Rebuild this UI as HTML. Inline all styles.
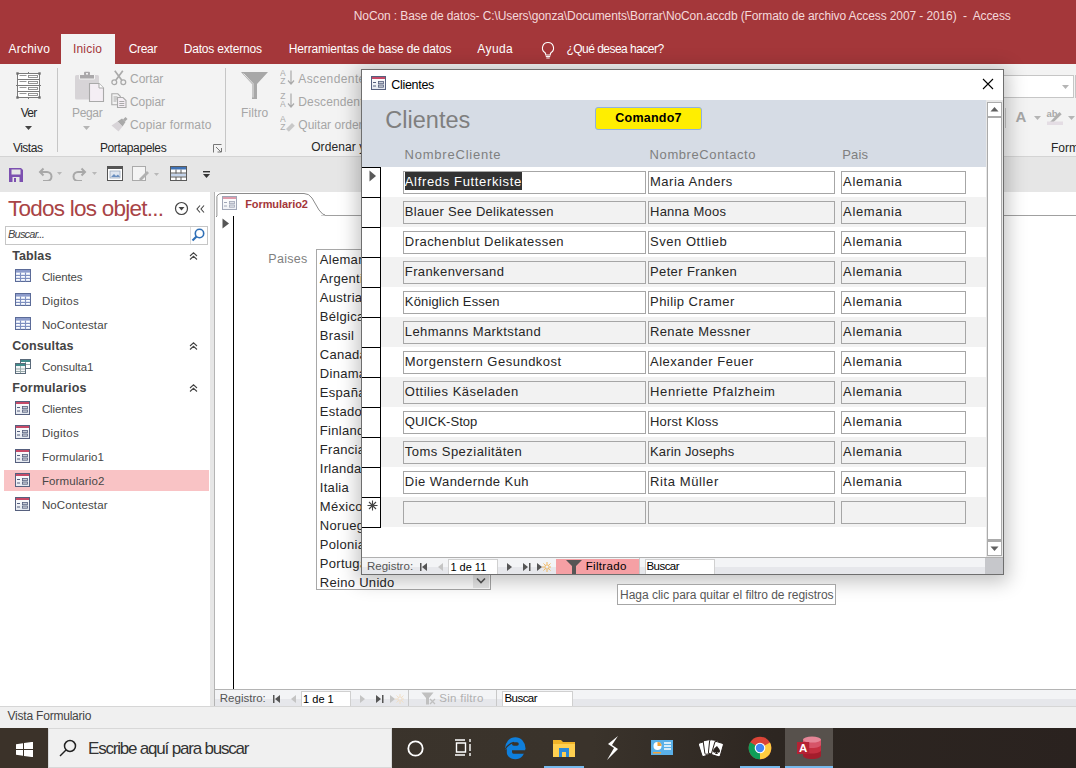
<!DOCTYPE html>
<html><head><meta charset="utf-8"><style>
html,body{margin:0;padding:0;width:1076px;height:768px;overflow:hidden;background:#fff;position:relative;font-family:"Liberation Sans", sans-serif;}
body>div, body>span, body>svg{position:absolute;box-sizing:border-box;}
.t{white-space:pre;}
</style></head><body>
<div style="left:0px;top:0px;width:1076px;height:64px;background:#a4373a;"></div>
<span id="t2c41942c" class="t" style="left:353.80px;top:9.84px;font-size:12px;line-height:12px;color:#f4d9da;font-weight:400;letter-spacing:-0.109px;">NoCon : Base de datos- C:\Users\gonza\Documents\Borrar\NoCon.accdb (Formato de archivo Access 2007 - 2016)  -  Access</span>
<div style="left:61px;top:34px;width:54px;height:30px;background:#f3f3f3;"></div>
<span id="t8937b4cb" class="t" style="left:8.60px;top:42.54px;font-size:12px;line-height:12px;color:#fff;font-weight:400;letter-spacing:0.214px;">Archivo</span>
<span id="td227f0e0" class="t" style="left:72.90px;top:42.54px;font-size:12px;line-height:12px;color:#a4373a;font-weight:400;letter-spacing:0.215px;">Inicio</span>
<span id="t27a76a8a" class="t" style="left:128.80px;top:42.54px;font-size:12px;line-height:12px;color:#fff;font-weight:400;letter-spacing:-0.355px;">Crear</span>
<span id="t04ee1a8f" class="t" style="left:183.70px;top:42.54px;font-size:12px;line-height:12px;color:#fff;font-weight:400;letter-spacing:-0.186px;">Datos externos</span>
<span id="t139b2d12" class="t" style="left:288.80px;top:42.54px;font-size:12px;line-height:12px;color:#fff;font-weight:400;letter-spacing:-0.169px;">Herramientas de base de datos</span>
<span id="t25d298b5" class="t" style="left:477.30px;top:42.54px;font-size:12px;line-height:12px;color:#fff;font-weight:400;letter-spacing:0.422px;">Ayuda</span>
<span id="t99ffe0c6" class="t" style="left:566.50px;top:42.54px;font-size:12px;line-height:12px;color:#fff;font-weight:400;letter-spacing:-0.530px;">¿Qué desea hacer?</span>
<svg style="left:538px;top:40px" width="20" height="20" viewBox="0 0 20 20"><path d="M10 2.5a5.5 5.5 0 0 0-3.2 10c.6.5.9 1.1.9 1.8v.7h4.6v-.7c0-.7.3-1.3.9-1.8A5.5 5.5 0 0 0 10 2.5z" fill="none" stroke="#fff" stroke-width="1.1"/><path d="M7.8 16.5h4.4M8.3 18h3.4" stroke="#fff" stroke-width="1.1"/></svg>
<div style="left:0px;top:64px;width:1076px;height:92px;background:#f3f3f3;"></div>
<div style="left:0px;top:156px;width:1076px;height:1px;background:#d4d4d4;"></div>
<div style="left:0px;top:157px;width:1076px;height:35px;background:#e6e6e6;"></div>
<div style="left:57px;top:68px;width:1px;height:84px;background:#c6c6c6;"></div>
<div style="left:225px;top:68px;width:1px;height:84px;background:#c6c6c6;"></div>
<svg style="left:15px;top:71px" width="28" height="29" viewBox="0 0 28 29">
<rect x="2.5" y="2.5" width="22" height="24" fill="#fff" stroke="#7a7a7a" stroke-width="1"/>
<path d="M2.5 8.5h22M1 14.5h25M2.5 20.5h22M13.5 1v2M13.5 26v2" stroke="#7a7a7a" stroke-width="1"/>
<g stroke="#8a8a8a" stroke-width="0.9"><path d="M4.5 4.5h7M4.5 10.5h7M4.5 16.5h7M4.5 22.5h7"/></g>
<g fill="none" stroke="#8a8a8a" stroke-width="0.9"><rect x="13.5" y="4.5" width="9" height="2"/><rect x="13.5" y="10.5" width="9" height="2"/><rect x="13.5" y="16.5" width="9" height="2"/><rect x="13.5" y="22.5" width="9" height="2"/></g>
<g fill="#6d6d6d"><rect x="1.3" y="1.3" width="2.4" height="2.4"/><rect x="23.3" y="1.3" width="2.4" height="2.4"/><rect x="1.3" y="25.3" width="2.4" height="2.4"/><rect x="23.3" y="25.3" width="2.4" height="2.4"/></g>
</svg>
<span id="tbc9aa845" class="t" style="left:20.70px;top:106.74px;font-size:12px;line-height:12px;color:#262626;font-weight:400;letter-spacing:-0.714px;">Ver</span>
<svg style="left:25px;top:126px" width="7" height="4"><path d="M0 0h7L3.5 4z" fill="#444"/></svg>
<span id="td7a6607a" class="t" style="left:12.90px;top:141.74px;font-size:12px;line-height:12px;color:#262626;font-weight:400;letter-spacing:-0.495px;">Vistas</span>
<svg style="left:74px;top:71px" width="31" height="32" viewBox="0 0 31 32">
<rect x="1" y="4" width="24" height="24.5" rx="1.5" fill="#d7d4d7"/>
<path d="M5.5 3.5h15v4.5h-15z" fill="#aaa8aa" stroke="#f3f3f3" stroke-width="1"/><rect x="10" y="0.8" width="6" height="3.5" rx="1" fill="#aaa8aa"/><rect x="12" y="2" width="2" height="1.6" fill="#f3f3f3"/>
<path d="M15.5 12.5h9.5l4.5 4.5v13.5h-14z" fill="#f4eef4" stroke="#a9a9a9" stroke-width="1.1"/><path d="M25 12.5v4.5h4.5" fill="#fff" stroke="#a9a9a9" stroke-width="1"/>
</svg>
<span id="t9d9e3550" class="t" style="left:72.00px;top:106.74px;font-size:12px;line-height:12px;color:#a6a6a6;font-weight:400;letter-spacing:-0.331px;">Pegar</span>
<svg style="left:83px;top:126px" width="7" height="4"><path d="M0 0h7L3.5 4z" fill="#b5b5b5"/></svg>
<svg style="left:111px;top:70px" width="16" height="16" viewBox="0 0 16 16" fill="none" stroke="#aaa" stroke-width="1.3">
<circle cx="3.3" cy="12.2" r="2.4"/><circle cx="12.3" cy="12.2" r="2.4"/><path d="M4.8 10.2L11.8 0.8M10.8 10.2L3.8 0.8" stroke-width="1.7"/></svg>
<span id="t2133024d" class="t" style="left:130.00px;top:72.64px;font-size:12px;line-height:12px;color:#a6a6a6;font-weight:400;letter-spacing:-0.008px;">Cortar</span>
<svg style="left:111px;top:93px" width="16" height="15" viewBox="0 0 16 15" fill="none" stroke="#aaa" stroke-width="1.1">
<path d="M0.8 0.8h6l2.5 2.5v8.5H0.8z" fill="#f3f3f3"/><path d="M2.5 4h4M2.5 6h4M2.5 8h3"/><path d="M6.5 4.5h5.5l3 3v7H6.5z" fill="#f4eef4"/><path d="M8.3 8.5h5M8.3 10.5h5M8.3 12.5h5"/></svg>
<span id="te0536d55" class="t" style="left:130.00px;top:95.64px;font-size:12px;line-height:12px;color:#a6a6a6;font-weight:400;letter-spacing:-0.073px;">Copiar</span>
<svg style="left:111px;top:116px" width="17" height="16" viewBox="0 0 17 16">
<path d="M12 3.5L14.5 1l2 2L14 5.5z" fill="#a9a9a9"/><path d="M6.5 5.5L11 2.5l3.5 3.5-3 4.5z" fill="#a9a9a9"/><path d="M0.5 9.5l6-4 5 5-4 5z" fill="#d8d4d8"/></svg>
<span id="t9d312f95" class="t" style="left:130.00px;top:118.54px;font-size:12px;line-height:12px;color:#a6a6a6;font-weight:400;letter-spacing:0.149px;">Copiar formato</span>
<span id="tdb10d478" class="t" style="left:99.90px;top:141.74px;font-size:12px;line-height:12px;color:#262626;font-weight:400;letter-spacing:-0.357px;">Portapapeles</span>
<svg style="left:213px;top:144px" width="9" height="9" viewBox="0 0 9 9" fill="none" stroke="#777" stroke-width="1"><path d="M0.5 8.5V0.5h8"/><path d="M3 3l5 5M4.5 8h4v-4"/></svg>
<svg style="left:240px;top:71px" width="29" height="29" viewBox="0 0 29 29">
<path d="M1 1h27L17 13v15h-5V13z" fill="#a8a8a8"/><path d="M3.5 2.5L13 12.5v14" fill="none" stroke="#e6e6e6" stroke-width="1"/></svg>
<span id="tf4739ed4" class="t" style="left:241.10px;top:106.54px;font-size:12px;line-height:12px;color:#a6a6a6;font-weight:400;letter-spacing:0.086px;">Filtro</span>
<svg style="left:280px;top:69px" width="15" height="64" viewBox="0 0 15 64" fill="none" stroke="#aaa" stroke-width="1.2">
<g fill="#aaa" stroke="none" font-family="Liberation Sans" font-size="8.5">
<text x="0" y="7">A</text><text x="0.3" y="15">Z</text>
<text x="0.3" y="30">Z</text><text x="0" y="38">A</text>
<text x="0" y="53">A</text><text x="0.3" y="61">Z</text></g>
<path d="M11 1.5v13M8 11.5l3 3.5 3-3.5"/>
<path d="M11 24.5v13M8 34.5l3 3.5 3-3.5"/>
<path d="M6 60l6-6 2.8 2.8-6 6z" fill="#c8c8c8" stroke="none"/>
</svg>
<span id="t75ef0aee" class="t" style="left:298.30px;top:72.64px;font-size:12px;line-height:12px;color:#a6a6a6;font-weight:400;letter-spacing:0.402px;">Ascendente</span>
<span id="t7c66c3f4" class="t" style="left:298.30px;top:95.64px;font-size:12px;line-height:12px;color:#a6a6a6;font-weight:400;letter-spacing:0.128px;">Descendente</span>
<span id="t8762347c" class="t" style="left:298.30px;top:118.64px;font-size:12px;line-height:12px;color:#a6a6a6;font-weight:400;letter-spacing:0.027px;">Quitar orden</span>
<span id="tcd19f41e" class="t" style="left:311.20px;top:141.34px;font-size:12px;line-height:12px;color:#262626;font-weight:400;letter-spacing:0.103px;">Ordenar y filtrar</span>
<div style="left:960px;top:75px;width:114px;height:23px;background:#fff;border:1px solid #c6c6c6;"></div>
<svg style="left:1062px;top:85px" width="7" height="4"><path d="M0 0h7L3.5 4z" fill="#b5b5b5"/></svg>
<div style="left:1005px;top:108px;width:1px;height:20px;background:#c6c6c6;"></div>
<span id="t583ee700" class="t" style="left:1015.50px;top:109.30px;font-size:15px;line-height:15px;color:#a6a6a6;font-weight:700;letter-spacing:0.000px;">A</span>
<svg style="left:1034px;top:116px" width="7" height="4"><path d="M0 0h7L3.5 4z" fill="#b5b5b5"/></svg>
<div style="left:1075px;top:75px;width:1px;height:23px;background:#c6c6c6;"></div>
<svg style="left:1046px;top:108px" width="18" height="18" viewBox="0 0 18 18"><text x="0.5" y="9" font-size="9.5" font-weight="bold" fill="#a9a9a9" font-family="Liberation Sans">ab</text><path d="M4.5 13.5L13.5 4l2.2 2.2-9.3 9z" fill="#b0b0b0"/><path d="M3.5 15l1-1.5 1.8 1.8z" fill="#999"/><rect x="1" y="13.5" width="16" height="3.5" fill="#e4dde4"/></svg>
<svg style="left:1068px;top:116px" width="7" height="4"><path d="M0 0h7L3.5 4z" fill="#b5b5b5"/></svg>
<span id="td6e61245" class="t" style="left:1050.90px;top:141.84px;font-size:12px;line-height:12px;color:#262626;font-weight:400;letter-spacing:0.000px;">Formato de texto</span>
<svg style="left:8px;top:167px" width="16" height="16" viewBox="0 0 16 16"><path d="M1 1h12l2 2v12H1z" fill="#7c50b0"/><rect x="3.5" y="2.5" width="9" height="5" fill="#e6e6e6"/><rect x="4.5" y="10" width="7" height="5" fill="#e6e6e6"/><rect x="6" y="11" width="2" height="4" fill="#7c50b0"/></svg>
<svg style="left:37px;top:166px" width="28" height="15" viewBox="0 0 28 15" fill="none" stroke="#a8a8a8" stroke-width="2"><path d="M3 6h7a4.5 4.5 0 0 1 0 9H6"/><path d="M6.5 2.5L3 6l3.5 3.5"/><path d="M20 6h5l-2.5 3z" fill="#b8b8b8" stroke="none"/></svg>
<svg style="left:72px;top:166px" width="28" height="15" viewBox="0 0 28 15" fill="none" stroke="#a8a8a8" stroke-width="2"><path d="M13 6H6a4.5 4.5 0 0 0 0 9h4"/><path d="M9.5 2.5L13 6l-3.5 3.5"/><path d="M20 6h5l-2.5 3z" fill="#b8b8b8" stroke="none"/></svg>
<svg style="left:107px;top:166px" width="16" height="15" viewBox="0 0 16 15"><rect x="0.5" y="0.5" width="15" height="14" fill="#fff" stroke="#555"/><rect x="0.5" y="0.5" width="15" height="2.5" fill="#555"/><rect x="3" y="5" width="10" height="7" fill="#dfe6f0" stroke="#9aa8bb" stroke-width="0.8"/><path d="M4 11l3-3 2 2 2-1.5 2 2.5z" fill="#6a8fc0"/></svg>
<svg style="left:132px;top:166px" width="30" height="16" viewBox="0 0 30 16"><rect x="0.5" y="0.5" width="13" height="14" fill="#f4f4f4" stroke="#aaa"/><path d="M7 13L15 5l2 2-8 8z" fill="#b0b0b0"/><path d="M22 7h5l-2.5 3z" fill="#b8b8b8"/></svg>
<svg style="left:170px;top:166px" width="17" height="15" viewBox="0 0 17 15"><rect x="0.5" y="0.5" width="16" height="14" fill="#fff" stroke="#5a5a5a"/><rect x="1" y="1" width="15" height="2.5" fill="#3f72b5"/><rect x="1" y="7.5" width="15" height="3" fill="#c3d3ea"/><path d="M1 7h15M1 11h15" stroke="#5a5a5a" stroke-width="1"/><path d="M6 3.5v4M11 3.5v4M6 11v3.5M11 11v3.5" stroke="#5a5a5a" stroke-width="1"/></svg>
<svg style="left:203px;top:171px" width="7" height="7" viewBox="0 0 7 7"><rect x="0" y="0" width="7" height="1.4" fill="#333"/><path d="M0 3h7L3.5 7z" fill="#333"/></svg>
<div style="left:0px;top:192px;width:210px;height:514px;background:#fff;"></div>
<span id="t23f088af" class="t" style="left:8.00px;top:197.95px;font-size:22.5px;line-height:22.5px;color:#a94446;font-weight:400;letter-spacing:-0.756px;">Todos los objet...</span>
<svg style="left:174px;top:201px" width="15" height="15" viewBox="0 0 15 15"><circle cx="7.5" cy="7.5" r="6" fill="none" stroke="#444" stroke-width="1.2"/><path d="M4.5 6h6l-3 3.5z" fill="#444"/></svg>
<svg style="left:196px;top:205px" width="9" height="8" viewBox="0 0 9 8" fill="none" stroke="#444" stroke-width="1.1"><path d="M4 0.5L1 4l3 3.5M8 0.5L5 4l3 3.5"/></svg>
<div style="left:5px;top:226px;width:203px;height:19px;background:#fff;border:1px solid #c6c6c6;"></div>
<div style="left:190px;top:227px;width:1px;height:17px;background:#dcdcdc;"></div>
<svg style="left:191px;top:228px" width="15" height="14" viewBox="0 0 15 14"><circle cx="8.5" cy="5.5" r="4.2" fill="none" stroke="#2f6fb6" stroke-width="1.6"/><path d="M5.5 8.5L1.5 12.5" stroke="#2f6fb6" stroke-width="2.2"/></svg>
<span id="t4825565f" class="t" style="left:8.00px;top:229.29px;font-size:11px;line-height:11px;color:#444;font-weight:400;letter-spacing:-0.788px;font-style:italic;">Buscar...</span>
<span id="tdbd657d5" class="t" style="left:12.20px;top:249.72px;font-size:12.5px;line-height:12.5px;color:#444;font-weight:700;letter-spacing:0.104px;">Tablas</span>
<svg style="left:189px;top:251.60000000000002px" width="9" height="8" viewBox="0 0 9 8" fill="none" stroke="#444" stroke-width="1.1"><path d="M1 4L4.5 0.8 8 4M1 7.5L4.5 4.3 8 7.5"/></svg>
<svg style="left:15px;top:269.3px" width="16" height="13" viewBox="0 0 16 13"><rect x="0.5" y="0.5" width="15" height="12" fill="#dfe6f4" stroke="#5b6b98"/><rect x="1" y="1" width="14" height="2.5" fill="#8d9ccb"/><path d="M1 6.5h14M1 9.5h14M5.5 3.5v9M10.5 3.5v9" stroke="#7f90c0" stroke-width="1"/><path d="M1.5 4.5h3M6.5 4.5h3M11.5 4.5h3M1.5 7.5h3M6.5 7.5h3M11.5 7.5h3M1.5 10.5h3M6.5 10.5h3M11.5 10.5h3" stroke="#fff" stroke-width="1"/></svg>
<span id="td8e4149c" class="t" style="left:41.90px;top:271.97px;font-size:11.5px;line-height:11.5px;color:#474747;font-weight:400;letter-spacing:-0.123px;">Clientes</span>
<svg style="left:15px;top:293.3px" width="16" height="13" viewBox="0 0 16 13"><rect x="0.5" y="0.5" width="15" height="12" fill="#dfe6f4" stroke="#5b6b98"/><rect x="1" y="1" width="14" height="2.5" fill="#8d9ccb"/><path d="M1 6.5h14M1 9.5h14M5.5 3.5v9M10.5 3.5v9" stroke="#7f90c0" stroke-width="1"/><path d="M1.5 4.5h3M6.5 4.5h3M11.5 4.5h3M1.5 7.5h3M6.5 7.5h3M11.5 7.5h3M1.5 10.5h3M6.5 10.5h3M11.5 10.5h3" stroke="#fff" stroke-width="1"/></svg>
<span id="t5487d355" class="t" style="left:41.90px;top:295.97px;font-size:11.5px;line-height:11.5px;color:#474747;font-weight:400;letter-spacing:0.289px;">Digitos</span>
<svg style="left:15px;top:317.3px" width="16" height="13" viewBox="0 0 16 13"><rect x="0.5" y="0.5" width="15" height="12" fill="#dfe6f4" stroke="#5b6b98"/><rect x="1" y="1" width="14" height="2.5" fill="#8d9ccb"/><path d="M1 6.5h14M1 9.5h14M5.5 3.5v9M10.5 3.5v9" stroke="#7f90c0" stroke-width="1"/><path d="M1.5 4.5h3M6.5 4.5h3M11.5 4.5h3M1.5 7.5h3M6.5 7.5h3M11.5 7.5h3M1.5 10.5h3M6.5 10.5h3M11.5 10.5h3" stroke="#fff" stroke-width="1"/></svg>
<span id="ta6d47f49" class="t" style="left:41.90px;top:319.97px;font-size:11.5px;line-height:11.5px;color:#474747;font-weight:400;letter-spacing:0.104px;">NoContestar</span>
<span id="tf32ed124" class="t" style="left:12.20px;top:339.72px;font-size:12.5px;line-height:12.5px;color:#444;font-weight:700;letter-spacing:0.108px;">Consultas</span>
<svg style="left:189px;top:341.6px" width="9" height="8" viewBox="0 0 9 8" fill="none" stroke="#444" stroke-width="1.1"><path d="M1 4L4.5 0.8 8 4M1 7.5L4.5 4.3 8 7.5"/></svg>
<svg style="left:15px;top:359.3px" width="16" height="15" viewBox="0 0 16 15"><rect x="5.5" y="0.5" width="10" height="9" fill="#fff" stroke="#5a6a7a"/><rect x="6" y="1" width="9" height="2" fill="#3f8a8a"/><path d="M6 5.5h9M10.5 3v6.5" stroke="#9aa"/><rect x="0.5" y="4.5" width="10" height="10" fill="#f4f6f8" stroke="#5a6a7a"/><rect x="1" y="5" width="9" height="2" fill="#3f8a8a"/><path d="M1 10h9M1 12.5h9M5.5 7v7" stroke="#9aa"/></svg>
<span id="t42013a82" class="t" style="left:41.90px;top:361.97px;font-size:11.5px;line-height:11.5px;color:#474747;font-weight:400;letter-spacing:-0.023px;">Consulta1</span>
<span id="t48282d93" class="t" style="left:12.20px;top:381.72px;font-size:12.5px;line-height:12.5px;color:#444;font-weight:700;letter-spacing:0.205px;">Formularios</span>
<svg style="left:189px;top:383.6px" width="9" height="8" viewBox="0 0 9 8" fill="none" stroke="#444" stroke-width="1.1"><path d="M1 4L4.5 0.8 8 4M1 7.5L4.5 4.3 8 7.5"/></svg>
<svg style="left:15px;top:400.6px" width="15" height="14" viewBox="0 0 15 14"><defs><linearGradient id="fg" x1="0" y1="0" x2="0" y2="1"><stop offset="0" stop-color="#fff"/><stop offset="1" stop-color="#e4e8f0"/></linearGradient></defs><rect x="0.5" y="0.5" width="14" height="13" fill="url(#fg)" stroke="#56607e"/><rect x="1" y="1" width="13" height="2" fill="#c64a68"/><path d="M2 6.5h3M2 10h3" stroke="#56607e" stroke-width="1"/><rect x="7.5" y="5.5" width="5" height="2.2" fill="#c8ccd6" stroke="#56607e" stroke-width="0.8"/><rect x="7.5" y="9" width="5" height="2.2" fill="#c8ccd6" stroke="#56607e" stroke-width="0.8"/></svg>
<span id="t90a23737" class="t" style="left:41.90px;top:404.27px;font-size:11.5px;line-height:11.5px;color:#474747;font-weight:400;letter-spacing:-0.123px;">Clientes</span>
<svg style="left:15px;top:424.6px" width="15" height="14" viewBox="0 0 15 14"><defs><linearGradient id="fg" x1="0" y1="0" x2="0" y2="1"><stop offset="0" stop-color="#fff"/><stop offset="1" stop-color="#e4e8f0"/></linearGradient></defs><rect x="0.5" y="0.5" width="14" height="13" fill="url(#fg)" stroke="#56607e"/><rect x="1" y="1" width="13" height="2" fill="#c64a68"/><path d="M2 6.5h3M2 10h3" stroke="#56607e" stroke-width="1"/><rect x="7.5" y="5.5" width="5" height="2.2" fill="#c8ccd6" stroke="#56607e" stroke-width="0.8"/><rect x="7.5" y="9" width="5" height="2.2" fill="#c8ccd6" stroke="#56607e" stroke-width="0.8"/></svg>
<span id="t9631d096" class="t" style="left:41.90px;top:428.27px;font-size:11.5px;line-height:11.5px;color:#474747;font-weight:400;letter-spacing:0.289px;">Digitos</span>
<div style="left:4px;top:470px;width:205px;height:21px;background:#f9c3c5;"></div>
<svg style="left:15px;top:448.6px" width="15" height="14" viewBox="0 0 15 14"><defs><linearGradient id="fg" x1="0" y1="0" x2="0" y2="1"><stop offset="0" stop-color="#fff"/><stop offset="1" stop-color="#e4e8f0"/></linearGradient></defs><rect x="0.5" y="0.5" width="14" height="13" fill="url(#fg)" stroke="#56607e"/><rect x="1" y="1" width="13" height="2" fill="#c64a68"/><path d="M2 6.5h3M2 10h3" stroke="#56607e" stroke-width="1"/><rect x="7.5" y="5.5" width="5" height="2.2" fill="#c8ccd6" stroke="#56607e" stroke-width="0.8"/><rect x="7.5" y="9" width="5" height="2.2" fill="#c8ccd6" stroke="#56607e" stroke-width="0.8"/></svg>
<span id="t59b45e81" class="t" style="left:41.90px;top:452.27px;font-size:11.5px;line-height:11.5px;color:#474747;font-weight:400;letter-spacing:0.074px;">Formulario1</span>
<svg style="left:15px;top:472.6px" width="15" height="14" viewBox="0 0 15 14"><defs><linearGradient id="fg" x1="0" y1="0" x2="0" y2="1"><stop offset="0" stop-color="#fff"/><stop offset="1" stop-color="#e4e8f0"/></linearGradient></defs><rect x="0.5" y="0.5" width="14" height="13" fill="url(#fg)" stroke="#56607e"/><rect x="1" y="1" width="13" height="2" fill="#c64a68"/><path d="M2 6.5h3M2 10h3" stroke="#56607e" stroke-width="1"/><rect x="7.5" y="5.5" width="5" height="2.2" fill="#c8ccd6" stroke="#56607e" stroke-width="0.8"/><rect x="7.5" y="9" width="5" height="2.2" fill="#c8ccd6" stroke="#56607e" stroke-width="0.8"/></svg>
<span id="te6fc467a" class="t" style="left:41.90px;top:476.27px;font-size:11.5px;line-height:11.5px;color:#474747;font-weight:400;letter-spacing:0.104px;">Formulario2</span>
<svg style="left:15px;top:496.6px" width="15" height="14" viewBox="0 0 15 14"><defs><linearGradient id="fg" x1="0" y1="0" x2="0" y2="1"><stop offset="0" stop-color="#fff"/><stop offset="1" stop-color="#e4e8f0"/></linearGradient></defs><rect x="0.5" y="0.5" width="14" height="13" fill="url(#fg)" stroke="#56607e"/><rect x="1" y="1" width="13" height="2" fill="#c64a68"/><path d="M2 6.5h3M2 10h3" stroke="#56607e" stroke-width="1"/><rect x="7.5" y="5.5" width="5" height="2.2" fill="#c8ccd6" stroke="#56607e" stroke-width="0.8"/><rect x="7.5" y="9" width="5" height="2.2" fill="#c8ccd6" stroke="#56607e" stroke-width="0.8"/></svg>
<span id="tc17f1f61" class="t" style="left:41.90px;top:500.27px;font-size:11.5px;line-height:11.5px;color:#474747;font-weight:400;letter-spacing:0.104px;">NoContestar</span>
<div style="left:210px;top:192px;width:5px;height:514px;background:#e6e6e6;border-right:1px solid #b4b4b4;"></div>
<div style="left:215px;top:192px;width:861px;height:497px;background:#fff;"></div>
<div style="left:321px;top:215px;width:755px;height:1px;background:#a0a0a0;"></div>
<svg style="left:215px;top:192px" width="110" height="25" viewBox="0 0 110 25"><path d="M1.5 25V7Q1.5 1.5 7 1.5H89Q94 1.5 97 6L104 18Q107.5 23.5 112 23.5" fill="#fff" stroke="#8c8c8c" stroke-width="1"/></svg>
<div style="left:216px;top:197px;width:2px;height:19px;background:linear-gradient(to right,#b0b0b0,#e0e0e0);"></div>
<div style="left:222px;top:196px;width:15px;height:14px;opacity:0.55"><svg style="position:absolute;left:0;top:0" width="15" height="14" viewBox="0 0 15 14"><defs><linearGradient id="fg" x1="0" y1="0" x2="0" y2="1"><stop offset="0" stop-color="#fff"/><stop offset="1" stop-color="#e4e8f0"/></linearGradient></defs><rect x="0.5" y="0.5" width="14" height="13" fill="url(#fg)" stroke="#56607e"/><rect x="1" y="1" width="13" height="2" fill="#c64a68"/><path d="M2 6.5h3M2 10h3" stroke="#56607e" stroke-width="1"/><rect x="7.5" y="5.5" width="5" height="2.2" fill="#c8ccd6" stroke="#56607e" stroke-width="0.8"/><rect x="7.5" y="9" width="5" height="2.2" fill="#c8ccd6" stroke="#56607e" stroke-width="0.8"/></svg></div>
<span id="t0a265c4b" class="t" style="left:245.20px;top:198.59px;font-size:11px;line-height:11px;color:#a4373a;font-weight:700;letter-spacing:-0.088px;">Formulario2</span>
<svg style="left:222px;top:218px" width="8" height="11"><path d="M0.5 0.5L7 5.5 0.5 10.5z" fill="#555"/></svg>
<div style="left:233px;top:216px;width:1px;height:473px;background:#000;"></div>
<span id="t6b83b9b6" class="t" style="left:268.25px;top:253.02px;font-size:12.5px;line-height:12.5px;color:#7f7f7f;font-weight:400;letter-spacing:0.293px;">Paises</span>
<div style="left:316px;top:249px;width:175px;height:341px;background:#fff;border:1px solid #a8a8a8;"></div>
<span id="t9f4787f9" class="t" style="left:319.80px;top:252.90px;font-size:13px;line-height:13px;color:#262626;font-weight:400;letter-spacing:0.000px;letter-spacing:0.3px;">Alemania</span>
<span id="tf00f7508" class="t" style="left:319.80px;top:271.88px;font-size:13px;line-height:13px;color:#262626;font-weight:400;letter-spacing:0.000px;letter-spacing:0.3px;">Argentina</span>
<span id="t31503581" class="t" style="left:319.80px;top:290.86px;font-size:13px;line-height:13px;color:#262626;font-weight:400;letter-spacing:0.000px;letter-spacing:0.3px;">Austria</span>
<span id="t8fdd35bd" class="t" style="left:319.80px;top:309.84px;font-size:13px;line-height:13px;color:#262626;font-weight:400;letter-spacing:0.000px;letter-spacing:0.3px;">Bélgica</span>
<span id="t6e7cf845" class="t" style="left:319.80px;top:328.82px;font-size:13px;line-height:13px;color:#262626;font-weight:400;letter-spacing:0.000px;letter-spacing:0.3px;">Brasil</span>
<span id="tb9fd8c13" class="t" style="left:319.80px;top:347.80px;font-size:13px;line-height:13px;color:#262626;font-weight:400;letter-spacing:0.000px;letter-spacing:0.3px;">Canadá</span>
<span id="t13a07c5e" class="t" style="left:319.80px;top:366.78px;font-size:13px;line-height:13px;color:#262626;font-weight:400;letter-spacing:0.000px;letter-spacing:0.3px;">Dinamarca</span>
<span id="tf9fc60ba" class="t" style="left:319.80px;top:385.76px;font-size:13px;line-height:13px;color:#262626;font-weight:400;letter-spacing:0.000px;letter-spacing:0.3px;">España</span>
<span id="te3f60418" class="t" style="left:319.80px;top:404.74px;font-size:13px;line-height:13px;color:#262626;font-weight:400;letter-spacing:0.000px;letter-spacing:0.3px;">Estados Unidos</span>
<span id="t4aa7602d" class="t" style="left:319.80px;top:423.72px;font-size:13px;line-height:13px;color:#262626;font-weight:400;letter-spacing:0.000px;letter-spacing:0.3px;">Finlandia</span>
<span id="tf104be39" class="t" style="left:319.80px;top:442.70px;font-size:13px;line-height:13px;color:#262626;font-weight:400;letter-spacing:0.000px;letter-spacing:0.3px;">Francia</span>
<span id="t932ea837" class="t" style="left:319.80px;top:461.68px;font-size:13px;line-height:13px;color:#262626;font-weight:400;letter-spacing:0.000px;letter-spacing:0.3px;">Irlanda</span>
<span id="ta0719065" class="t" style="left:319.80px;top:480.66px;font-size:13px;line-height:13px;color:#262626;font-weight:400;letter-spacing:0.000px;letter-spacing:0.3px;">Italia</span>
<span id="t0631243b" class="t" style="left:319.80px;top:499.64px;font-size:13px;line-height:13px;color:#262626;font-weight:400;letter-spacing:0.000px;letter-spacing:0.3px;">México</span>
<span id="t431e602e" class="t" style="left:319.80px;top:518.62px;font-size:13px;line-height:13px;color:#262626;font-weight:400;letter-spacing:0.000px;letter-spacing:0.3px;">Noruega</span>
<span id="ta773ce62" class="t" style="left:319.80px;top:537.60px;font-size:13px;line-height:13px;color:#262626;font-weight:400;letter-spacing:0.000px;letter-spacing:0.3px;">Polonia</span>
<span id="t84010567" class="t" style="left:319.80px;top:556.58px;font-size:13px;line-height:13px;color:#262626;font-weight:400;letter-spacing:0.000px;letter-spacing:0.3px;">Portugal</span>
<span id="t0fd8140c" class="t" style="left:319.80px;top:575.56px;font-size:13px;line-height:13px;color:#262626;font-weight:400;letter-spacing:0.000px;letter-spacing:0.3px;">Reino Unido</span>
<div style="left:473px;top:575px;width:16px;height:13px;background:#e8e8e8;"></div>
<svg style="left:476px;top:577px" width="10" height="8" viewBox="0 0 10 8" fill="none" stroke="#555" stroke-width="1.6"><path d="M1 1.5l4 4 4-4"/></svg>
<div style="left:215px;top:689px;width:861px;height:17px;background:linear-gradient(#f3f4f6 0,#f3f4f6 55%,#e6e7eb 55%,#e6e7eb 100%);border-top:1px solid #b4b4b4;"></div>
<span id="t1ff04a0d" class="t" style="left:219.80px;top:693.17px;font-size:11.5px;line-height:11.5px;color:#555;font-weight:400;letter-spacing:-0.003px;">Registro:</span>
<svg style="left:272.5px;top:695px" width="8" height="8"><rect x="0" y="0" width="1.5" height="8" fill="#555"/><path d="M7 0v8L2 4z" fill="#555"/></svg>
<svg style="left:291px;top:695px" width="6" height="8"><path d="M5 0v8L0 4z" fill="#c4c4c4"/></svg>
<svg style="left:359.5px;top:695px" width="6" height="8"><path d="M0 0v8l5-4z" fill="#c4c4c4"/></svg>
<svg style="left:375.5px;top:695px" width="8" height="8"><path d="M0 0v8l5-4z" fill="#555"/><rect x="6" y="0" width="1.5" height="8" fill="#555"/></svg>
<svg style="left:390px;top:693px" width="14" height="12"><path d="M0 2v8l5-4z" fill="#c4c4c4"/><g stroke="#f2dcc0" stroke-width="0.9"><path d="M10 1v2M10 9v2M5 6h2M13 6h2M6.5 2.5l1.4 1.4M12.1 8.1l1.4 1.4M13.5 2.5l-1.4 1.4M7.9 8.1l-1.4 1.4"/></g><circle cx="10" cy="6" r="2.2" fill="none" stroke="#f2dcc0" stroke-width="1"/></svg>
<div style="left:301px;top:691px;width:50px;height:15px;background:#fff;border:1px solid #d0d0d0;border-bottom:none;"></div>
<span id="t2292e475" class="t" style="left:303.10px;top:693.59px;font-size:11px;line-height:11px;color:#000;font-weight:400;letter-spacing:0.000px;">1 de 1</span>
<div style="left:408px;top:690px;width:1px;height:16px;background:#c8c8c8;"></div>
<svg style="left:421px;top:692px" width="16" height="13" viewBox="0 0 16 13"><path d="M0.5 0.5h12L8 6v6.5H5V6z" fill="#c0c0c0"/><path d="M9 7l5 5M14 7l-5 5" stroke="#c0c0c0" stroke-width="1.3"/></svg>
<span id="t4b180bce" class="t" style="left:439.30px;top:693.17px;font-size:11.5px;line-height:11.5px;color:#b0b0b0;font-weight:400;letter-spacing:0.272px;">Sin filtro</span>
<div style="left:496px;top:690px;width:1px;height:16px;background:#c8c8c8;"></div>
<div style="left:502px;top:691px;width:71px;height:15px;background:#fff;border:1px solid #d0d0d0;border-bottom:none;"></div>
<span id="tb32c1af9" class="t" style="left:504.50px;top:693.17px;font-size:11.5px;line-height:11.5px;color:#000;font-weight:400;letter-spacing:-0.561px;">Buscar</span>
<div style="left:0px;top:706px;width:1076px;height:22px;background:#f0f0f0;border-top:1px solid #d6d6d6;"></div>
<span id="teb0de47b" class="t" style="left:7.50px;top:709.64px;font-size:12px;line-height:12px;color:#444;font-weight:400;letter-spacing:-0.209px;">Vista Formulario</span>
<div style="left:0px;top:728px;width:1076px;height:40px;background:linear-gradient(to right,#3b342c 0,#3a332b 55%,#2d2621 72%,#2a221f 100%);"></div>
<div style="left:0px;top:728px;width:48px;height:40px;background:#3b3229;"></div>
<svg style="left:16px;top:742px" width="17" height="15" viewBox="0 0 17 15" fill="#fff"><path d="M0 2.2L7 1.2V7H0zM8 1l9-1.2V7H8zM0 8h7v5.8l-7-1zM8 8h9v7.2l-9-1.3z"/></svg>
<div style="left:48px;top:728px;width:344px;height:40px;background:#f0f0f0;border:1px solid #d8d8d8;"></div>
<svg style="left:59px;top:739px" width="18" height="18" viewBox="0 0 18 18" fill="none" stroke="#222" stroke-width="1.5"><circle cx="11" cy="7" r="5.5"/><path d="M7 11L1 17"/></svg>
<span id="tcb0579c4" class="t" style="left:88.00px;top:740.31px;font-size:17px;line-height:17px;color:#333;font-weight:400;letter-spacing:-1.196px;">Escribe aquí para buscar</span>
<svg style="left:407px;top:740px" width="17" height="17"><circle cx="8.5" cy="8.5" r="7.2" fill="none" stroke="#fff" stroke-width="1.8"/></svg>
<svg style="left:455px;top:739px" width="18" height="17" viewBox="0 0 18 17" fill="none" stroke="#fff" stroke-width="1.4"><path d="M0 1h10M0 16h10M1.5 4h9v9h-9z"/><path d="M15 0v3M15 5v7M15 14v3"/></svg>
<svg style="left:504px;top:736px" width="23" height="25" viewBox="0 0 23 25">
<ellipse cx="11.3" cy="12.2" rx="10.2" ry="11" fill="#0f7fdc"/>
<rect x="8" y="6.2" width="6.8" height="3.6" rx="1.8" fill="#3a332b"/>
<path d="M8 14.2h15v3.6H9.5Q8 17.8 8 16z" fill="#3a332b"/>
<path d="M19.2 17.8v3.5Q16 23.4 11.5 23.4" fill="none"/>
<path d="M1 13.5Q4.5 7.5 10 6.3" fill="none" stroke="#3a332b" stroke-width="1.2"/><path d="M0 14.5Q1 15 2.8 12.8V22H0z" fill="#3a332b"/>
</svg>
<svg style="left:553px;top:738px" width="22" height="19" viewBox="0 0 22 19"><path d="M0 2h8l2 2h12v15H0z" fill="#f0b429"/><rect x="0" y="6" width="22" height="13" fill="#ffd050"/><path d="M6 10h10v9h-3v-5h-4v5H6z" fill="#2b8ad8"/></svg>
<div style="left:544px;top:766px;width:40px;height:2px;background:#76b9ed;"></div>
<svg style="left:605px;top:736px" width="15" height="24" viewBox="0 0 15 24"><path d="M13 0L3 8l6 4L2 24l11-11-6-4z" fill="#fff"/></svg>
<svg style="left:651px;top:740px" width="22" height="15" viewBox="0 0 22 15"><rect x="0" y="0" width="22" height="15" fill="#5ab0e8"/><circle cx="6.5" cy="6" r="4" fill="#fff"/><path d="M6.5 6V2a4 4 0 0 1 4 4z" fill="#f3a33a"/><path d="M13 3h7M13 6h7M13 9h7" stroke="#fff" stroke-width="1.3"/><rect x="2" y="12" width="8" height="1.5" fill="#f3a33a"/></svg>
<svg style="left:699px;top:738px" width="25" height="21" viewBox="0 0 25 21"><g fill="#fff" stroke="#2b231f" stroke-width="1"><rect x="1" y="4" width="9" height="14" rx="1.5" transform="rotate(-18 5 11)"/><rect x="5" y="2" width="9" height="14" rx="1.5" transform="rotate(-8 9 9)"/><rect x="10" y="2" width="9" height="14" rx="1.5" transform="rotate(6 14 9)"/><rect x="14" y="4" width="9" height="14" rx="1.5" transform="rotate(16 18 11)"/></g><path d="M18 8c-2 2-4 3-4 5s2 2 3 1l-1 2h3l-1-2c1 1 3 1 3-1s-2-3-3-5z" fill="#2b231f"/></svg>
<svg style="left:748px;top:736px" width="24" height="24" viewBox="0 0 24 24"><circle cx="12" cy="12" r="11.3" fill="#db4437"/><path d="M12 12L2.2 6.3A11.3 11.3 0 0 0 12 23.3z" fill="#0f9d58"/><path d="M12 12h11.3A11.3 11.3 0 0 1 12 23.3z" fill="#ffcd40"/><path d="M12 12l11.3 0A11.3 11.3 0 0 0 22 6.5z" fill="#ffcd40"/><circle cx="12" cy="12" r="5.3" fill="#fff"/><circle cx="12" cy="12" r="4.2" fill="#4285f4"/></svg>
<div style="left:740px;top:766px;width:40px;height:2px;background:#76b9ed;"></div>
<div style="left:785px;top:728px;width:48px;height:40px;background:#57514c;"></div>
<svg style="left:796px;top:736px" width="26" height="24" viewBox="0 0 26 24">
<path d="M7 3.5v16c0 2 4 3.5 9 3.5s9-1.5 9-3.5v-16z" fill="#a41d2c"/>
<path d="M7 3.5v10.5c0 2 4 3.5 9 3.5s9-1.5 9-3.5V3.5z" fill="#c42f40"/>
<path d="M7 3.5v5c0 2 4 3.5 9 3.5s9-1.5 9-3.5v-5z" fill="#d65468"/>
<ellipse cx="16" cy="3.6" rx="9" ry="3" fill="#e58596"/>
<rect x="1" y="6" width="12.2" height="12" fill="#b52233"/>
<text x="3" y="16.3" font-size="11.5" font-weight="bold" fill="#fff" font-family="Liberation Sans">A</text>
</svg>
<div style="left:785px;top:766px;width:48px;height:2px;background:#76b9ed;"></div>
<div style="left:361px;top:69px;width:643px;height:506px;background:#fff;border:1px solid #6e6e6e;box-shadow:0 3px 18px 4px rgba(0,0,0,0.24);"></div>
<svg style="left:371px;top:76px" width="15" height="14" viewBox="0 0 15 14"><defs><linearGradient id="fg" x1="0" y1="0" x2="0" y2="1"><stop offset="0" stop-color="#fff"/><stop offset="1" stop-color="#e4e8f0"/></linearGradient></defs><rect x="0.5" y="0.5" width="14" height="13" fill="url(#fg)" stroke="#56607e"/><rect x="1" y="1" width="13" height="2" fill="#c64a68"/><path d="M2 6.5h3M2 10h3" stroke="#56607e" stroke-width="1"/><rect x="7.5" y="5.5" width="5" height="2.2" fill="#c8ccd6" stroke="#56607e" stroke-width="0.8"/><rect x="7.5" y="9" width="5" height="2.2" fill="#c8ccd6" stroke="#56607e" stroke-width="0.8"/></svg>
<span id="t786a1f93" class="t" style="left:391.30px;top:79.02px;font-size:12.5px;line-height:12.5px;color:#000;font-weight:400;letter-spacing:-0.310px;">Clientes</span>
<svg style="left:982px;top:78px" width="12" height="12" viewBox="0 0 12 12" stroke="#000" stroke-width="1.1"><path d="M1 1l10 10M11 1L1 11"/></svg>
<div style="left:362px;top:100px;width:624px;height:67px;background:#d6dce5;"></div>
<div style="left:986px;top:100px;width:17px;height:457px;background:#e8e8e8;"></div>
<span id="teaf98c69" class="t" style="left:385.30px;top:109.31px;font-size:23.5px;line-height:23.5px;color:#7f7f7f;font-weight:400;letter-spacing:0.013px;">Clientes</span>
<div style="left:595px;top:107px;width:107px;height:23px;background:#ffee00;border:1px solid #8fb0e0;border-radius:3px;"></div>
<span id="tc7f1de84" class="t" style="left:615.30px;top:112.12px;font-size:12.5px;line-height:12.5px;color:#000;font-weight:700;letter-spacing:0.230px;">Comando7</span>
<span id="t93882de1" class="t" style="left:404.60px;top:148.30px;font-size:13px;line-height:13px;color:#7f7f7f;font-weight:400;letter-spacing:0.774px;">NombreCliente</span>
<span id="t72daf83b" class="t" style="left:649.60px;top:148.30px;font-size:13px;line-height:13px;color:#7f7f7f;font-weight:400;letter-spacing:0.586px;">NombreContacto</span>
<span id="t6ea645e6" class="t" style="left:842.20px;top:148.30px;font-size:13px;line-height:13px;color:#7f7f7f;font-weight:400;letter-spacing:0.168px;">Pais</span>
<div style="left:987px;top:102px;width:15px;height:16px;background:#fff;border:1px solid #ababab;border-bottom:2px solid #ababab;"></div>
<svg style="left:990px;top:106px" width="9" height="6"><path d="M0.5 5.5L4.5 1l4 4.5z" fill="#606060"/></svg>
<div style="left:987px;top:118px;width:15px;height:422px;background:#fff;border:1px solid #ababab;border-top:none;"></div>
<div style="left:987px;top:540px;width:15px;height:16px;background:#fff;border:1px solid #ababab;border-top:2px solid #ababab;"></div>
<svg style="left:990px;top:546px" width="9" height="6"><path d="M0.5 0.5L4.5 5l4-4.5z" fill="#606060"/></svg>
<div style="left:362px;top:167px;width:624px;height:390px;background:#fff;"></div>
<div style="left:381px;top:167px;width:605px;height:30px;background:#fff;"></div>
<div style="left:361px;top:167px;width:20px;height:31px;background:#fff;border:1px solid #000;border-left:none;"></div>
<div style="left:403px;top:171px;width:243px;height:23px;background:#fff;border:1px solid #a6a6a6;"></div>
<div style="left:648px;top:171px;width:187px;height:23px;background:#fff;border:1px solid #a6a6a6;"></div>
<div style="left:841px;top:171px;width:125px;height:23px;background:#fff;border:1px solid #a6a6a6;"></div>
<div style="left:405px;top:172px;width:117px;height:18px;background:#333;"></div>
<span id="t3647d2b3" class="t" style="left:404.80px;top:174.60px;font-size:13px;line-height:13px;color:#fff;font-weight:400;letter-spacing:0.647px;">Alfreds Futterkiste</span>
<span id="t6523336d" class="t" style="left:650.00px;top:174.60px;font-size:13px;line-height:13px;color:#262626;font-weight:400;letter-spacing:0.518px;">Maria Anders</span>
<span id="tde2942c5" class="t" style="left:843.10px;top:174.60px;font-size:13px;line-height:13px;color:#262626;font-weight:400;letter-spacing:0.642px;">Alemania</span>
<div style="left:381px;top:197px;width:605px;height:30px;background:#f2f2f2;"></div>
<div style="left:361px;top:197px;width:20px;height:31px;background:#fff;border:1px solid #000;border-left:none;"></div>
<div style="left:403px;top:201px;width:243px;height:23px;background:#f2f2f2;border:1px solid #a6a6a6;"></div>
<div style="left:648px;top:201px;width:187px;height:23px;background:#f2f2f2;border:1px solid #a6a6a6;"></div>
<div style="left:841px;top:201px;width:125px;height:23px;background:#f2f2f2;border:1px solid #a6a6a6;"></div>
<span id="td47237bb" class="t" style="left:404.80px;top:204.60px;font-size:13px;line-height:13px;color:#262626;font-weight:400;letter-spacing:0.288px;">Blauer See Delikatessen</span>
<span id="t4bfddd8b" class="t" style="left:650.00px;top:204.60px;font-size:13px;line-height:13px;color:#262626;font-weight:400;letter-spacing:0.253px;">Hanna Moos</span>
<span id="tbd22c03e" class="t" style="left:843.10px;top:204.60px;font-size:13px;line-height:13px;color:#262626;font-weight:400;letter-spacing:0.642px;">Alemania</span>
<div style="left:381px;top:227px;width:605px;height:30px;background:#fff;"></div>
<div style="left:361px;top:227px;width:20px;height:31px;background:#fff;border:1px solid #000;border-left:none;"></div>
<div style="left:403px;top:231px;width:243px;height:23px;background:#fff;border:1px solid #a6a6a6;"></div>
<div style="left:648px;top:231px;width:187px;height:23px;background:#fff;border:1px solid #a6a6a6;"></div>
<div style="left:841px;top:231px;width:125px;height:23px;background:#fff;border:1px solid #a6a6a6;"></div>
<span id="t9ea7481d" class="t" style="left:404.80px;top:234.60px;font-size:13px;line-height:13px;color:#262626;font-weight:400;letter-spacing:0.464px;">Drachenblut Delikatessen</span>
<span id="t98ae5a6b" class="t" style="left:650.00px;top:234.60px;font-size:13px;line-height:13px;color:#262626;font-weight:400;letter-spacing:0.543px;">Sven Ottlieb</span>
<span id="tb81d4452" class="t" style="left:843.10px;top:234.60px;font-size:13px;line-height:13px;color:#262626;font-weight:400;letter-spacing:0.642px;">Alemania</span>
<div style="left:381px;top:257px;width:605px;height:30px;background:#f2f2f2;"></div>
<div style="left:361px;top:257px;width:20px;height:31px;background:#fff;border:1px solid #000;border-left:none;"></div>
<div style="left:403px;top:261px;width:243px;height:23px;background:#f2f2f2;border:1px solid #a6a6a6;"></div>
<div style="left:648px;top:261px;width:187px;height:23px;background:#f2f2f2;border:1px solid #a6a6a6;"></div>
<div style="left:841px;top:261px;width:125px;height:23px;background:#f2f2f2;border:1px solid #a6a6a6;"></div>
<span id="te6a94fb5" class="t" style="left:404.80px;top:264.60px;font-size:13px;line-height:13px;color:#262626;font-weight:400;letter-spacing:0.397px;">Frankenversand</span>
<span id="t0153b885" class="t" style="left:650.00px;top:264.60px;font-size:13px;line-height:13px;color:#262626;font-weight:400;letter-spacing:0.369px;">Peter Franken</span>
<span id="t1d73a167" class="t" style="left:843.10px;top:264.60px;font-size:13px;line-height:13px;color:#262626;font-weight:400;letter-spacing:0.642px;">Alemania</span>
<div style="left:381px;top:287px;width:605px;height:30px;background:#fff;"></div>
<div style="left:361px;top:287px;width:20px;height:31px;background:#fff;border:1px solid #000;border-left:none;"></div>
<div style="left:403px;top:291px;width:243px;height:23px;background:#fff;border:1px solid #a6a6a6;"></div>
<div style="left:648px;top:291px;width:187px;height:23px;background:#fff;border:1px solid #a6a6a6;"></div>
<div style="left:841px;top:291px;width:125px;height:23px;background:#fff;border:1px solid #a6a6a6;"></div>
<span id="t02e27cf3" class="t" style="left:404.80px;top:294.60px;font-size:13px;line-height:13px;color:#262626;font-weight:400;letter-spacing:0.164px;">Königlich Essen</span>
<span id="t01b0c880" class="t" style="left:650.00px;top:294.60px;font-size:13px;line-height:13px;color:#262626;font-weight:400;letter-spacing:0.458px;">Philip Cramer</span>
<span id="tde1537cb" class="t" style="left:843.10px;top:294.60px;font-size:13px;line-height:13px;color:#262626;font-weight:400;letter-spacing:0.642px;">Alemania</span>
<div style="left:381px;top:317px;width:605px;height:30px;background:#f2f2f2;"></div>
<div style="left:361px;top:317px;width:20px;height:31px;background:#fff;border:1px solid #000;border-left:none;"></div>
<div style="left:403px;top:321px;width:243px;height:23px;background:#f2f2f2;border:1px solid #a6a6a6;"></div>
<div style="left:648px;top:321px;width:187px;height:23px;background:#f2f2f2;border:1px solid #a6a6a6;"></div>
<div style="left:841px;top:321px;width:125px;height:23px;background:#f2f2f2;border:1px solid #a6a6a6;"></div>
<span id="ta6ff1413" class="t" style="left:404.80px;top:324.60px;font-size:13px;line-height:13px;color:#262626;font-weight:400;letter-spacing:0.404px;">Lehmanns Marktstand</span>
<span id="t05f7001b" class="t" style="left:650.00px;top:324.60px;font-size:13px;line-height:13px;color:#262626;font-weight:400;letter-spacing:0.378px;">Renate Messner</span>
<span id="td927a887" class="t" style="left:843.10px;top:324.60px;font-size:13px;line-height:13px;color:#262626;font-weight:400;letter-spacing:0.642px;">Alemania</span>
<div style="left:381px;top:347px;width:605px;height:30px;background:#fff;"></div>
<div style="left:361px;top:347px;width:20px;height:31px;background:#fff;border:1px solid #000;border-left:none;"></div>
<div style="left:403px;top:351px;width:243px;height:23px;background:#fff;border:1px solid #a6a6a6;"></div>
<div style="left:648px;top:351px;width:187px;height:23px;background:#fff;border:1px solid #a6a6a6;"></div>
<div style="left:841px;top:351px;width:125px;height:23px;background:#fff;border:1px solid #a6a6a6;"></div>
<span id="td82a309d" class="t" style="left:404.80px;top:354.60px;font-size:13px;line-height:13px;color:#262626;font-weight:400;letter-spacing:0.497px;">Morgenstern Gesundkost</span>
<span id="t21eca3f6" class="t" style="left:650.00px;top:354.60px;font-size:13px;line-height:13px;color:#262626;font-weight:400;letter-spacing:0.520px;">Alexander Feuer</span>
<span id="tf687b55d" class="t" style="left:843.10px;top:354.60px;font-size:13px;line-height:13px;color:#262626;font-weight:400;letter-spacing:0.642px;">Alemania</span>
<div style="left:381px;top:377px;width:605px;height:30px;background:#f2f2f2;"></div>
<div style="left:361px;top:377px;width:20px;height:31px;background:#fff;border:1px solid #000;border-left:none;"></div>
<div style="left:403px;top:381px;width:243px;height:23px;background:#f2f2f2;border:1px solid #a6a6a6;"></div>
<div style="left:648px;top:381px;width:187px;height:23px;background:#f2f2f2;border:1px solid #a6a6a6;"></div>
<div style="left:841px;top:381px;width:125px;height:23px;background:#f2f2f2;border:1px solid #a6a6a6;"></div>
<span id="t5e059c91" class="t" style="left:404.80px;top:384.60px;font-size:13px;line-height:13px;color:#262626;font-weight:400;letter-spacing:0.506px;">Ottilies Käseladen</span>
<span id="tdc4428fb" class="t" style="left:650.00px;top:384.60px;font-size:13px;line-height:13px;color:#262626;font-weight:400;letter-spacing:0.636px;">Henriette Pfalzheim</span>
<span id="tcacf376c" class="t" style="left:843.10px;top:384.60px;font-size:13px;line-height:13px;color:#262626;font-weight:400;letter-spacing:0.642px;">Alemania</span>
<div style="left:381px;top:407px;width:605px;height:30px;background:#fff;"></div>
<div style="left:361px;top:407px;width:20px;height:31px;background:#fff;border:1px solid #000;border-left:none;"></div>
<div style="left:403px;top:411px;width:243px;height:23px;background:#fff;border:1px solid #a6a6a6;"></div>
<div style="left:648px;top:411px;width:187px;height:23px;background:#fff;border:1px solid #a6a6a6;"></div>
<div style="left:841px;top:411px;width:125px;height:23px;background:#fff;border:1px solid #a6a6a6;"></div>
<span id="t855ed937" class="t" style="left:404.80px;top:414.60px;font-size:13px;line-height:13px;color:#262626;font-weight:400;letter-spacing:0.028px;">QUICK-Stop</span>
<span id="te5e0148f" class="t" style="left:650.00px;top:414.60px;font-size:13px;line-height:13px;color:#262626;font-weight:400;letter-spacing:0.173px;">Horst Kloss</span>
<span id="t3c9a6cce" class="t" style="left:843.10px;top:414.60px;font-size:13px;line-height:13px;color:#262626;font-weight:400;letter-spacing:0.642px;">Alemania</span>
<div style="left:381px;top:437px;width:605px;height:30px;background:#f2f2f2;"></div>
<div style="left:361px;top:437px;width:20px;height:31px;background:#fff;border:1px solid #000;border-left:none;"></div>
<div style="left:403px;top:441px;width:243px;height:23px;background:#f2f2f2;border:1px solid #a6a6a6;"></div>
<div style="left:648px;top:441px;width:187px;height:23px;background:#f2f2f2;border:1px solid #a6a6a6;"></div>
<div style="left:841px;top:441px;width:125px;height:23px;background:#f2f2f2;border:1px solid #a6a6a6;"></div>
<span id="tb043bf88" class="t" style="left:404.80px;top:444.60px;font-size:13px;line-height:13px;color:#262626;font-weight:400;letter-spacing:0.464px;">Toms Spezialitäten</span>
<span id="te21a05af" class="t" style="left:650.00px;top:444.60px;font-size:13px;line-height:13px;color:#262626;font-weight:400;letter-spacing:0.155px;">Karin Josephs</span>
<span id="tc7e9af3a" class="t" style="left:843.10px;top:444.60px;font-size:13px;line-height:13px;color:#262626;font-weight:400;letter-spacing:0.642px;">Alemania</span>
<div style="left:381px;top:467px;width:605px;height:30px;background:#fff;"></div>
<div style="left:361px;top:467px;width:20px;height:31px;background:#fff;border:1px solid #000;border-left:none;"></div>
<div style="left:403px;top:471px;width:243px;height:23px;background:#fff;border:1px solid #a6a6a6;"></div>
<div style="left:648px;top:471px;width:187px;height:23px;background:#fff;border:1px solid #a6a6a6;"></div>
<div style="left:841px;top:471px;width:125px;height:23px;background:#fff;border:1px solid #a6a6a6;"></div>
<span id="t068a5f8e" class="t" style="left:404.80px;top:474.60px;font-size:13px;line-height:13px;color:#262626;font-weight:400;letter-spacing:0.450px;">Die Wandernde Kuh</span>
<span id="t8a873903" class="t" style="left:650.00px;top:474.60px;font-size:13px;line-height:13px;color:#262626;font-weight:400;letter-spacing:0.608px;">Rita Müller</span>
<span id="t6b08d9eb" class="t" style="left:843.10px;top:474.60px;font-size:13px;line-height:13px;color:#262626;font-weight:400;letter-spacing:0.642px;">Alemania</span>
<div style="left:381px;top:497px;width:605px;height:30px;background:#f2f2f2;"></div>
<div style="left:361px;top:497px;width:20px;height:31px;background:#fff;border:1px solid #000;border-left:none;"></div>
<div style="left:403px;top:501px;width:243px;height:23px;background:#f2f2f2;border:1px solid #a6a6a6;"></div>
<div style="left:648px;top:501px;width:187px;height:23px;background:#f2f2f2;border:1px solid #a6a6a6;"></div>
<div style="left:841px;top:501px;width:125px;height:23px;background:#f2f2f2;border:1px solid #a6a6a6;"></div>
<div style="left:361px;top:167px;width:1px;height:390px;background:#6e6e6e;"></div>
<svg style="left:369px;top:170px" width="8" height="12"><path d="M0.5 0.5L7 6 0.5 11.5z" fill="#595959"/></svg>
<svg style="left:367px;top:500px" width="11" height="11" viewBox="0 0 11 11" stroke="#444" stroke-width="1.1"><path d="M5.5 0.5v10M0.5 5.5h10M2 2l7 7M9 2l-7 7"/></svg>
<div style="left:362px;top:557px;width:623px;height:17px;background:linear-gradient(#f3f4f6 0,#f3f4f6 55%,#e6e7eb 55%,#e6e7eb 100%);border-top:1px solid #b0b0b0;"></div>
<div style="left:985px;top:557px;width:18px;height:17px;background:#c6c7cb;border-top:1px solid #b0b0b0;"></div>
<span id="td5103a73" class="t" style="left:366.90px;top:561.17px;font-size:11.5px;line-height:11.5px;color:#555;font-weight:400;letter-spacing:0.021px;">Registro:</span>
<svg style="left:419.8px;top:563px" width="8" height="8"><rect x="0" y="0" width="1.5" height="8" fill="#555"/><path d="M7 0v8L2 4z" fill="#555"/></svg>
<svg style="left:437.7px;top:563px" width="6" height="8"><path d="M5 0v8L0 4z" fill="#c4c4c4"/></svg>
<svg style="left:506.8px;top:563px" width="6" height="8"><path d="M0 0v8l5-4z" fill="#555"/></svg>
<svg style="left:522.6px;top:563px" width="8" height="8"><path d="M0 0v8l5-4z" fill="#555"/><rect x="6" y="0" width="1.5" height="8" fill="#555"/></svg>
<svg style="left:536.6px;top:561px" width="14" height="12"><path d="M0 2v8l5-4z" fill="#555"/><g stroke="#f0b050" stroke-width="0.9"><path d="M10 1v2M10 9v2M5 6h2M13 6h2M6.5 2.5l1.4 1.4M12.1 8.1l1.4 1.4M13.5 2.5l-1.4 1.4M7.9 8.1l-1.4 1.4"/></g><circle cx="10" cy="6" r="2.2" fill="none" stroke="#f0b050" stroke-width="1"/></svg>
<div style="left:448px;top:559px;width:50px;height:15px;background:#fff;border:1px solid #d0d0d0;border-bottom:none;"></div>
<span id="tcfba1a93" class="t" style="left:450.40px;top:561.59px;font-size:11px;line-height:11px;color:#000;font-weight:400;letter-spacing:0.000px;">1 de 11</span>
<div style="left:556px;top:559px;width:83px;height:15px;background:#f5a0a4;"></div>
<svg style="left:566px;top:560px" width="17" height="14" viewBox="0 0 17 14"><path d="M0 0h16L10 6v8H6V6z" fill="#555"/></svg>
<span id="te988274e" class="t" style="left:585.70px;top:561.17px;font-size:11.5px;line-height:11.5px;color:#000;font-weight:400;letter-spacing:0.320px;">Filtrado</span>
<div style="left:639px;top:558px;width:1px;height:16px;background:#c8c8c8;"></div>
<div style="left:645px;top:559px;width:70px;height:15px;background:#fff;border:1px solid #d0d0d0;border-bottom:none;"></div>
<span id="t2e509aa2" class="t" style="left:646.50px;top:561.17px;font-size:11.5px;line-height:11.5px;color:#000;font-weight:400;letter-spacing:-0.561px;">Buscar</span>
<div style="left:617px;top:584px;width:219px;height:21px;background:#fff;border:1px solid #a6a6a6;"></div>
<span id="te92d4e0f" class="t" style="left:620.10px;top:589.14px;font-size:12px;line-height:12px;color:#575757;font-weight:400;letter-spacing:-0.030px;">Haga clic para quitar el filtro de registros</span>
</body></html>
